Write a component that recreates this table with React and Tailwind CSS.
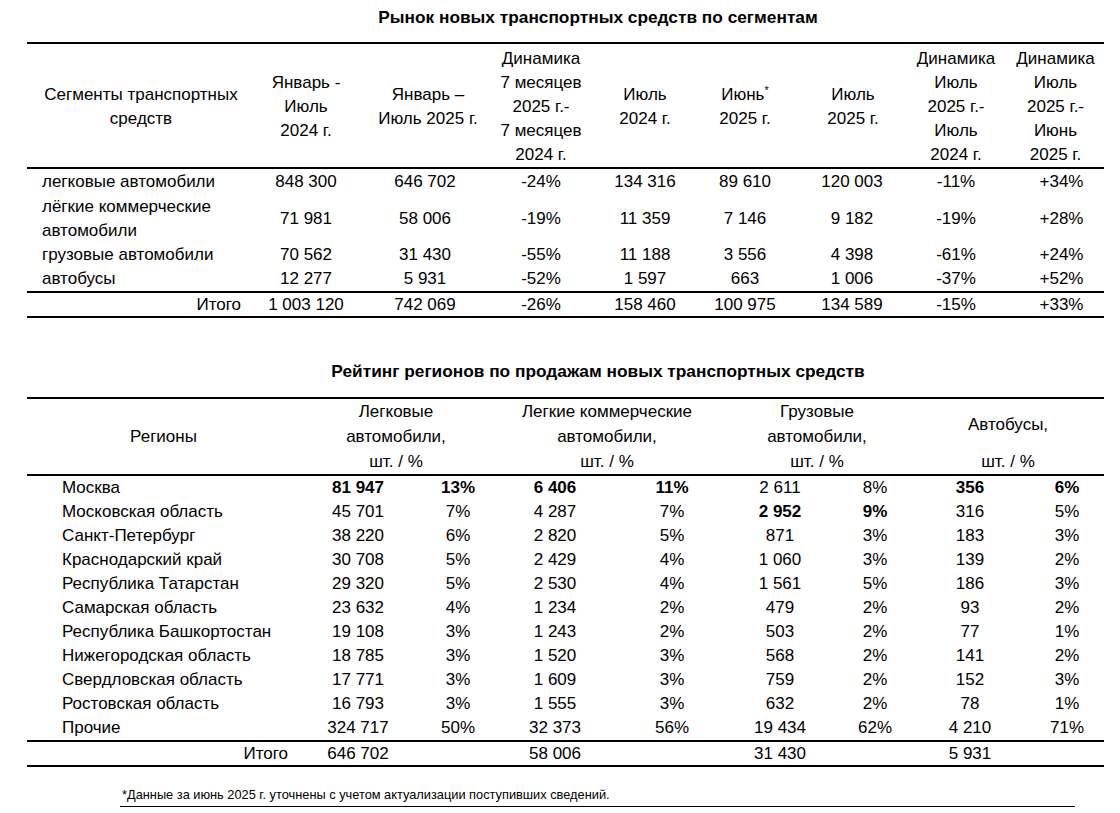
import React from "react";

const topCols = "grid grid-cols-[228px_102px_136px_96px_112px_88px_116px_102px_97px]";
const botCols = "grid grid-cols-[283px_96px_104px_90px_144px_72px_118px_72px_98px]";
const botHead = "grid grid-cols-[273px_192px_230px_190px_192px]";

const topRows = [
  { name: ["легковые автомобили"], v: ["848 300", "646 702", "-24%", "134 316", "89 610", "120 003", "-11%", "+34%"], h: "h-[25px]" },
  { name: ["лёгкие коммерческие", "автомобили"], v: ["71 981", "58 006", "-19%", "11 359", "7 146", "9 182", "-19%", "+28%"], h: "h-[49px]" },
  { name: ["грузовые автомобили"], v: ["70 562", "31 430", "-55%", "11 188", "3 556", "4 398", "-61%", "+24%"], h: "h-[24px]" },
  { name: ["автобусы"], v: ["12 277", "5 931", "-52%", "1 597", "663", "1 006", "-37%", "+52%"], h: "h-[24px]" },
];

const regions = [
  ["Москва", "81 947", "13%", "6 406", "11%", "2 611", "8%", "356", "6%", [1, 1, 1, 1, 0, 0, 1, 1]],
  ["Московская область", "45 701", "7%", "4 287", "7%", "2 952", "9%", "316", "5%", [0, 0, 0, 0, 1, 1, 0, 0]],
  ["Санкт-Петербург", "38 220", "6%", "2 820", "5%", "871", "3%", "183", "3%"],
  ["Краснодарский край", "30 708", "5%", "2 429", "4%", "1 060", "3%", "139", "2%"],
  ["Республика Татарстан", "29 320", "5%", "2 530", "4%", "1 561", "5%", "186", "3%"],
  ["Самарская область", "23 632", "4%", "1 234", "2%", "479", "2%", "93", "2%"],
  ["Республика Башкортостан", "19 108", "3%", "1 243", "2%", "503", "2%", "77", "1%"],
  ["Нижегородская область", "18 785", "3%", "1 520", "3%", "568", "2%", "141", "2%"],
  ["Свердловская область", "17 771", "3%", "1 609", "3%", "759", "2%", "152", "3%"],
  ["Ростовская область", "16 793", "3%", "1 555", "3%", "632", "2%", "78", "1%"],
  ["Прочие", "324 717", "50%", "32 373", "56%", "19 434", "62%", "4 210", "71%"],
];

function Lines({ items }) {
  return items.map((t, i) => (
    <React.Fragment key={i}>
      {i > 0 && <br />}
      {t}
    </React.Fragment>
  ));
}

function HCell({ children, className = "" }) {
  return <div className={`flex items-center justify-center text-center ${className}`}>{children}</div>;
}

export default function App() {
  return (
    <div className="w-[1120px] h-[813px] bg-white text-black font-['Liberation_Sans',Arial,sans-serif] text-[17px] leading-[24px] overflow-hidden">
      {/* Title 1 */}
      <div className="pl-[76px] pt-[5px] h-[42px] text-center font-bold text-[17.3px] leading-[24px]">
        Рынок новых транспортных средств по сегментам
      </div>

      {/* Top table */}
      <div className="ml-[27px] w-[1077px]">
        <div className="h-[2px] bg-black" />
        <div className={`${topCols} h-[123px] pt-[3px]`}>
          <HCell><span><Lines items={["Сегменты транспортных", "средств"]} /></span></HCell>
          <HCell><span><Lines items={["Январь -", "Июль", "2024 г."]} /></span></HCell>
          <HCell className="pl-[6px]"><span><Lines items={["Январь –", "Июль 2025 г."]} /></span></HCell>
          <HCell><span><Lines items={["Динамика", "7 месяцев", "2025 г.-", "7 месяцев", "2024 г."]} /></span></HCell>
          <HCell><span><Lines items={["Июль", "2024 г."]} /></span></HCell>
          <HCell>
            <span>
              Июнь<span className="text-[11px] leading-none relative top-[-6px]">*</span>
              <br />
              2025 г.
            </span>
          </HCell>
          <HCell className="pl-[12px]"><span><Lines items={["Июль", "2025 г."]} /></span></HCell>
          <HCell><span><Lines items={["Динамика", "Июль", "2025 г.-", "Июль", "2024 г."]} /></span></HCell>
          <HCell><span><Lines items={["Динамика", "Июль", "2025 г.-", "Июнь", "2025 г."]} /></span></HCell>
        </div>
        <div className="h-[2px] bg-black" />
        {topRows.map((r, i) => (
          <div key={i} className={`${topCols} ${r.h}`}>
            <div className="pl-[15px] flex items-center"><span><Lines items={r.name} /></span></div>
            {r.v.map((v, j) => (
              <div key={j} className={`flex items-center justify-center ${j === 7 ? "pl-[12px]" : ""} ${j === 5 ? "pl-[10px]" : ""}`}>{v}</div>
            ))}
          </div>
        ))}
        <div className="h-[2px] bg-black" />
        <div className={`${topCols} h-[23px]`}>
          <div className="pr-[14px] text-right">Итого</div>
          {["1 003 120", "742 069", "-26%", "158 460", "100 975", "134 589", "-15%", "+33%"].map((v, j) => (
            <div key={j} className={`text-center ${j === 7 ? "pl-[12px]" : ""} ${j === 5 ? "pl-[10px]" : ""}`}>{v}</div>
          ))}
        </div>
        <div className="h-[2px] bg-black" />
      </div>

      {/* Title 2 */}
      <div className="pl-[76px] pt-[41px] h-[79px] text-center font-bold text-[17.3px] leading-[24px]">
        Рейтинг регионов по продажам новых транспортных средств
      </div>

      {/* Bottom table */}
      <div className="ml-[27px] w-[1077px]">
        <div className="h-[2px] bg-black" />
        <div className={`${botHead} h-[75px]`}>
          <div className="flex items-center justify-center">Регионы</div>
          {[
            ["Легковые", "автомобили,"],
            ["Легкие коммерческие", "автомобили,"],
            ["Грузовые", "автомобили,"],
            ["Автобусы,"],
          ].map((h, i) => (
            <div key={i} className="flex flex-col">
              <div className="h-[50px] flex items-center justify-center text-center leading-[25px]">
                <span><Lines items={h} /></span>
              </div>
              <div className="h-[25px] flex items-center justify-center">шт. / %</div>
            </div>
          ))}
        </div>
        <div className="h-[2px] bg-black" />
        {regions.map((r, i) => {
          const bold = r[9] || [];
          return (
            <div key={i} className={`${botCols} h-[24px]`}>
              <div className="pl-[35px]">{r[0]}</div>
              {r.slice(1, 9).map((v, j) => (
                <div key={j} className={`text-center ${j === 7 ? "pl-[24px]" : ""} ${bold[j] ? "font-bold" : ""}`}>{v}</div>
              ))}
            </div>
          );
        })}
        <div className="h-[2px] bg-black" />
        <div className={`${botCols} h-[23px]`}>
          <div className="pr-[22px] text-right">Итого</div>
          <div className="text-center">646 702</div>
          <div />
          <div className="text-center">58 006</div>
          <div />
          <div className="text-center">31 430</div>
          <div />
          <div className="text-center">5 931</div>
          <div />
        </div>
        <div className="h-[2px] bg-black" />
      </div>

      {/* Footnote */}
      <div className="ml-[120px] w-[955px] mt-[20px] pl-[2px] pb-[3px] border-b border-black text-[12.8px] leading-[16px]">
        *Данные за июнь 2025 г. уточнены с учетом актуализации поступивших сведений.
      </div>
    </div>
  );
}
